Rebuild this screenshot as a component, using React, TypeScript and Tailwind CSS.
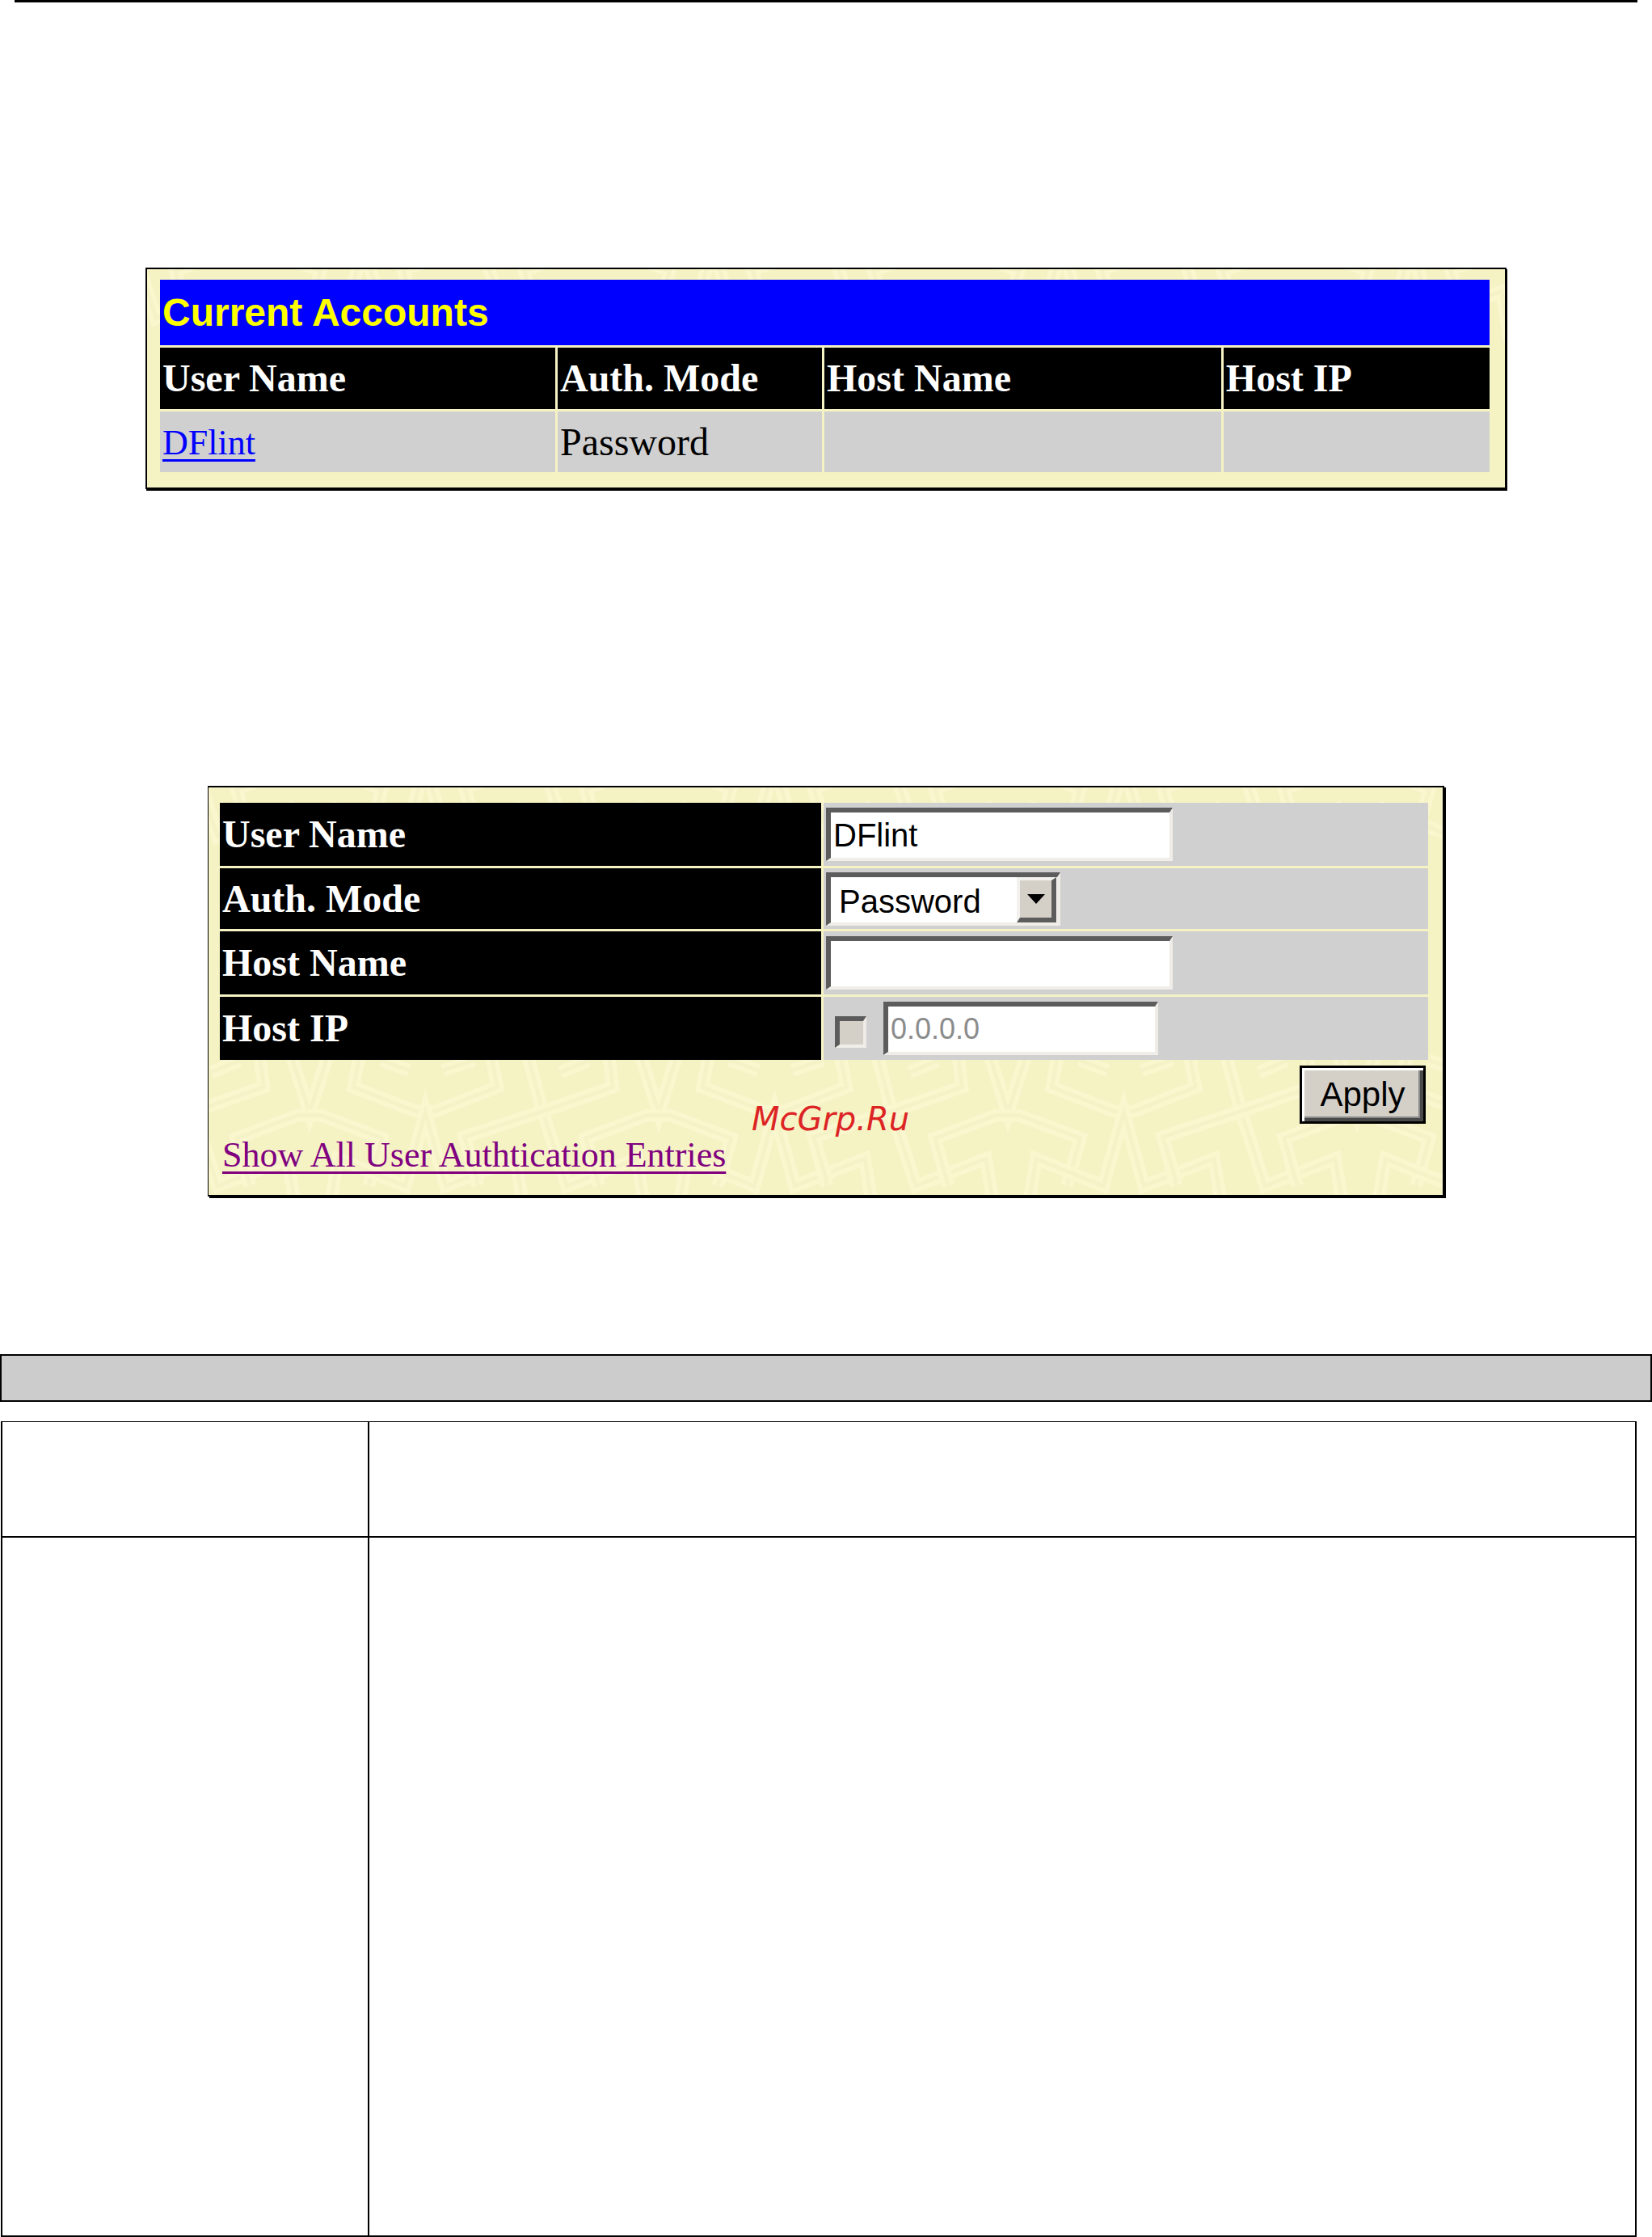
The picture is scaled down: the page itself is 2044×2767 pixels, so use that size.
import { useId, useState } from "react";

const serif = "font-['Liberation_Serif',serif]";
const sans = "font-['Liberation_Sans',sans-serif]";

const sunken =
  "border-t-[6px] border-l-[6px] border-r-4 border-b-4 border-t-[#5c5c5c] border-l-[#5c5c5c] border-r-[#efece7] border-b-[#f1eeea] rounded-none outline-none";

const bands = [
  "M190 -10 L205 110 L-56 200 L-346 295 L-296 460",
  "M300 -30 L375 205 L450 -30",
  "M154 477 L104 300 L330 215 L418 215 L644 300 L594 477",
  "M565 -30 L538 110 L770 200 L840 200 L1072 110 L1045 -30",
  "M450 560 L480 376 L730 477 L805 205 L880 477 L1140 376 L1170 560",
  "M1180 -30 L1240 200 L1330 477 L1590 376 L1620 560",
  "M1501 110 L1240 200 L950 295 L1000 477",
  "M640 10 L745 48",
  "M870 48 L985 10",
  "M1306 55 L1410 12",
  "M10 55 L114 12",
];

function BandSet() {
  return (
    <>
      {bands.map((d) => (
        <g key={d} fill="none">
          <path d={d} stroke="#faf7cf" strokeWidth="48" />
          <path d={d} stroke="#f5f2c8" strokeWidth="14" />
        </g>
      ))}
    </>
  );
}

function Wallpaper() {
  const id = useId();
  const shifts = [-432, 0, 432];
  return (
    <svg className="absolute inset-0 h-full w-full" aria-hidden="true">
      <defs>
        <pattern id={id} width="432" height="432" patternUnits="userSpaceOnUse">
          <rect width="432" height="432" fill="#f5f2c4" />
          {shifts.map((x) =>
            [-98, 334].map((y) => (
              <g key={`${x}/${y}`} transform={`translate(${x} ${y}) scale(0.3333)`}>
                <BandSet />
              </g>
            )),
          )}
        </pattern>
      </defs>
      <rect width="100%" height="100%" fill={`url(#${id})`} />
    </svg>
  );
}

function AccountsPanel() {
  const head = "h-[76px] bg-black pl-[3px] text-left align-middle text-[48px] leading-[54px] font-bold text-white";
  const cell = "h-[75px] bg-[#d0d0d0] pl-[3px] align-middle text-[48px] leading-[54px]";
  return (
    <section className="relative mx-[180px] mt-[328px] border-2 border-black shadow-[1px_2px_0_0_#000]">
      <Wallpaper />
      <div className="relative pt-[10px] pr-4 pb-4 pl-[13px]">
        <table className={`w-full table-fixed border-separate border-spacing-[3px] text-black ${serif}`}>
          <colgroup>
            <col className="w-[489px]" />
            <col className="w-[327px]" />
            <col className="w-[30%]" />
            <col />
          </colgroup>
          <thead>
            <tr>
              <th
                colSpan={4}
                className={`h-[81px] bg-[#0000ff] pl-[3px] text-left align-middle text-[48px] leading-[54px] font-bold text-[#ffff00] ${sans}`}
              >
                Current Accounts
              </th>
            </tr>
            <tr>
              <th className={head}>User Name</th>
              <th className={head}>Auth. Mode</th>
              <th className={head}>Host Name</th>
              <th className={head}>Host IP</th>
            </tr>
          </thead>
          <tbody>
            <tr>
              <td className={cell}>
                <a
                  href="#dflint"
                  className="text-[44px] text-[#0000ff] underline decoration-[3px] underline-offset-[6px]"
                >
                  DFlint
                </a>
              </td>
              <td className={cell}>Password</td>
              <td className={cell} />
              <td className={cell} />
            </tr>
          </tbody>
        </table>
      </div>
    </section>
  );
}

function AccountForm() {
  const [user, setUser] = useState("DFlint");
  const [mode, setMode] = useState("Password");
  const [host, setHost] = useState("");
  const label = `bg-black pl-[3px] text-left align-middle text-[48px] leading-[54px] font-bold text-white ${serif}`;
  const cell = "bg-[#d0d0d0] pl-[3px] align-middle";
  const text = `block h-[66px] bg-white pl-[3px] text-[40px] text-black ${sans} ${sunken}`;
  return (
    <section className="relative mx-[257px] mt-[367px] border-2 border-l border-black shadow-[2px_2px_0_0_#000]">
      <Wallpaper />
      <form className="relative pt-4 pr-[15px] pb-[23px] pl-[11px]" onSubmit={(e) => e.preventDefault()}>
        <table className="w-full table-fixed border-separate border-spacing-[3px]">
          <colgroup>
            <col className="w-[744px]" />
            <col />
          </colgroup>
          <tbody>
            <tr className="h-[78px]">
              <th className={label}>
                <label htmlFor="user">User Name</label>
              </th>
              <td className={cell}>
                <input id="user" className={`w-[429px] ${text}`} value={user} onChange={(e) => setUser(e.target.value)} />
              </td>
            </tr>
            <tr className="h-[75px]">
              <th className={label}>
                <label htmlFor="mode">Auth. Mode</label>
              </th>
              <td className={cell}>
                <div className="relative w-[290px]">
                  <select
                    id="mode"
                    className={`w-full appearance-none ${text} pl-[10px]`}
                    value={mode}
                    onChange={(e) => setMode(e.target.value)}
                  >
                    <option>Password</option>
                    <option>Public Key</option>
                    <option>Host Based</option>
                  </select>
                  <span className="pointer-events-none absolute top-[6px] right-[5px] flex h-[56px] w-[49px] items-center justify-center border-t-4 border-r-[6px] border-b-[6px] border-l-4 border-t-[#f3f1ee] border-r-[#5c5c5c] border-b-[#5c5c5c] border-l-[#f3f1ee] bg-[#d4d0c8]">
                    <svg width="22" height="12" viewBox="0 0 22 12" aria-hidden="true">
                      <path d="M0 0 H22 L11 12 Z" fill="#000" />
                    </svg>
                  </span>
                </div>
              </td>
            </tr>
            <tr className="h-[78px]">
              <th className={label}>
                <label htmlFor="host">Host Name</label>
              </th>
              <td className={cell}>
                <input id="host" className={`w-[429px] ${text}`} value={host} onChange={(e) => setHost(e.target.value)} />
              </td>
            </tr>
            <tr className="h-[78px]">
              <th className={label}>
                <label htmlFor="ip">Host IP</label>
              </th>
              <td className={cell}>
                <div className="flex items-center gap-[21px] pl-[11px]">
                  <input
                    type="checkbox"
                    disabled
                    aria-label="Use host IP"
                    className={`mt-2 h-[39px] w-[39px] appearance-none bg-[#d4d0c8] ${sunken}`}
                  />
                  <input
                    id="ip"
                    disabled
                    defaultValue="0.0.0.0"
                    className={`h-[66px] w-[340px] bg-white pl-[3px] text-[36px] text-[#8c8c8c] ${sans} ${sunken}`}
                  />
                </div>
              </td>
            </tr>
          </tbody>
        </table>
        <div className="mt-1 flex justify-end pr-[6px]">
          <button
            type="submit"
            className={`h-[72px] w-[156px] border-[3px] border-black bg-[#d4d0c8] text-[42px] leading-[48px] text-black shadow-[inset_3px_3px_0_0_#fff,inset_-4px_-4px_0_0_#4a4a4a,inset_-6px_-6px_0_0_#8a8a8a] ${sans}`}
          >
            Apply
          </button>
        </div>
        <div className={`mt-[13px] pl-[6px] text-[44px] leading-[52px] ${serif}`}>
          <a href="#all" className="text-[#800080] underline decoration-[3px] underline-offset-[6px]">
            Show All User Authtication Entries
          </a>
        </div>
      </form>
      <span className="pointer-events-none absolute inset-x-0 bottom-[70px] pl-3 text-center font-['DejaVu_Sans',sans-serif] text-[40px] leading-[48px] text-[#dd2424] italic">
        McGrp.Ru
      </span>
    </section>
  );
}

function ParameterTable() {
  return (
    <table className="mt-6 mr-[19px] ml-px w-[calc(100%-20px)] table-fixed border-separate border-spacing-0 border-t border-l-2 border-black">
      <colgroup>
        <col className="w-[454px]" />
        <col />
      </colgroup>
      <tbody>
        <tr>
          <td className="h-[143px] border-r-2 border-b-2 border-black" />
          <td className="h-[143px] border-r-2 border-b-2 border-black" />
        </tr>
        <tr>
          <td className="h-[865px] border-r-2 border-b-2 border-black" />
          <td className="h-[865px] border-r-2 border-b-2 border-black" />
        </tr>
      </tbody>
    </table>
  );
}

export default function App() {
  return (
    <main className="flow-root bg-white">
      <div className="mx-[18px] h-[3px] bg-black" />
      <AccountsPanel />
      <AccountForm />
      <div className="mt-[195px] h-[59px] border-2 border-black bg-[#cccccc]" />
      <ParameterTable />
    </main>
  );
}
